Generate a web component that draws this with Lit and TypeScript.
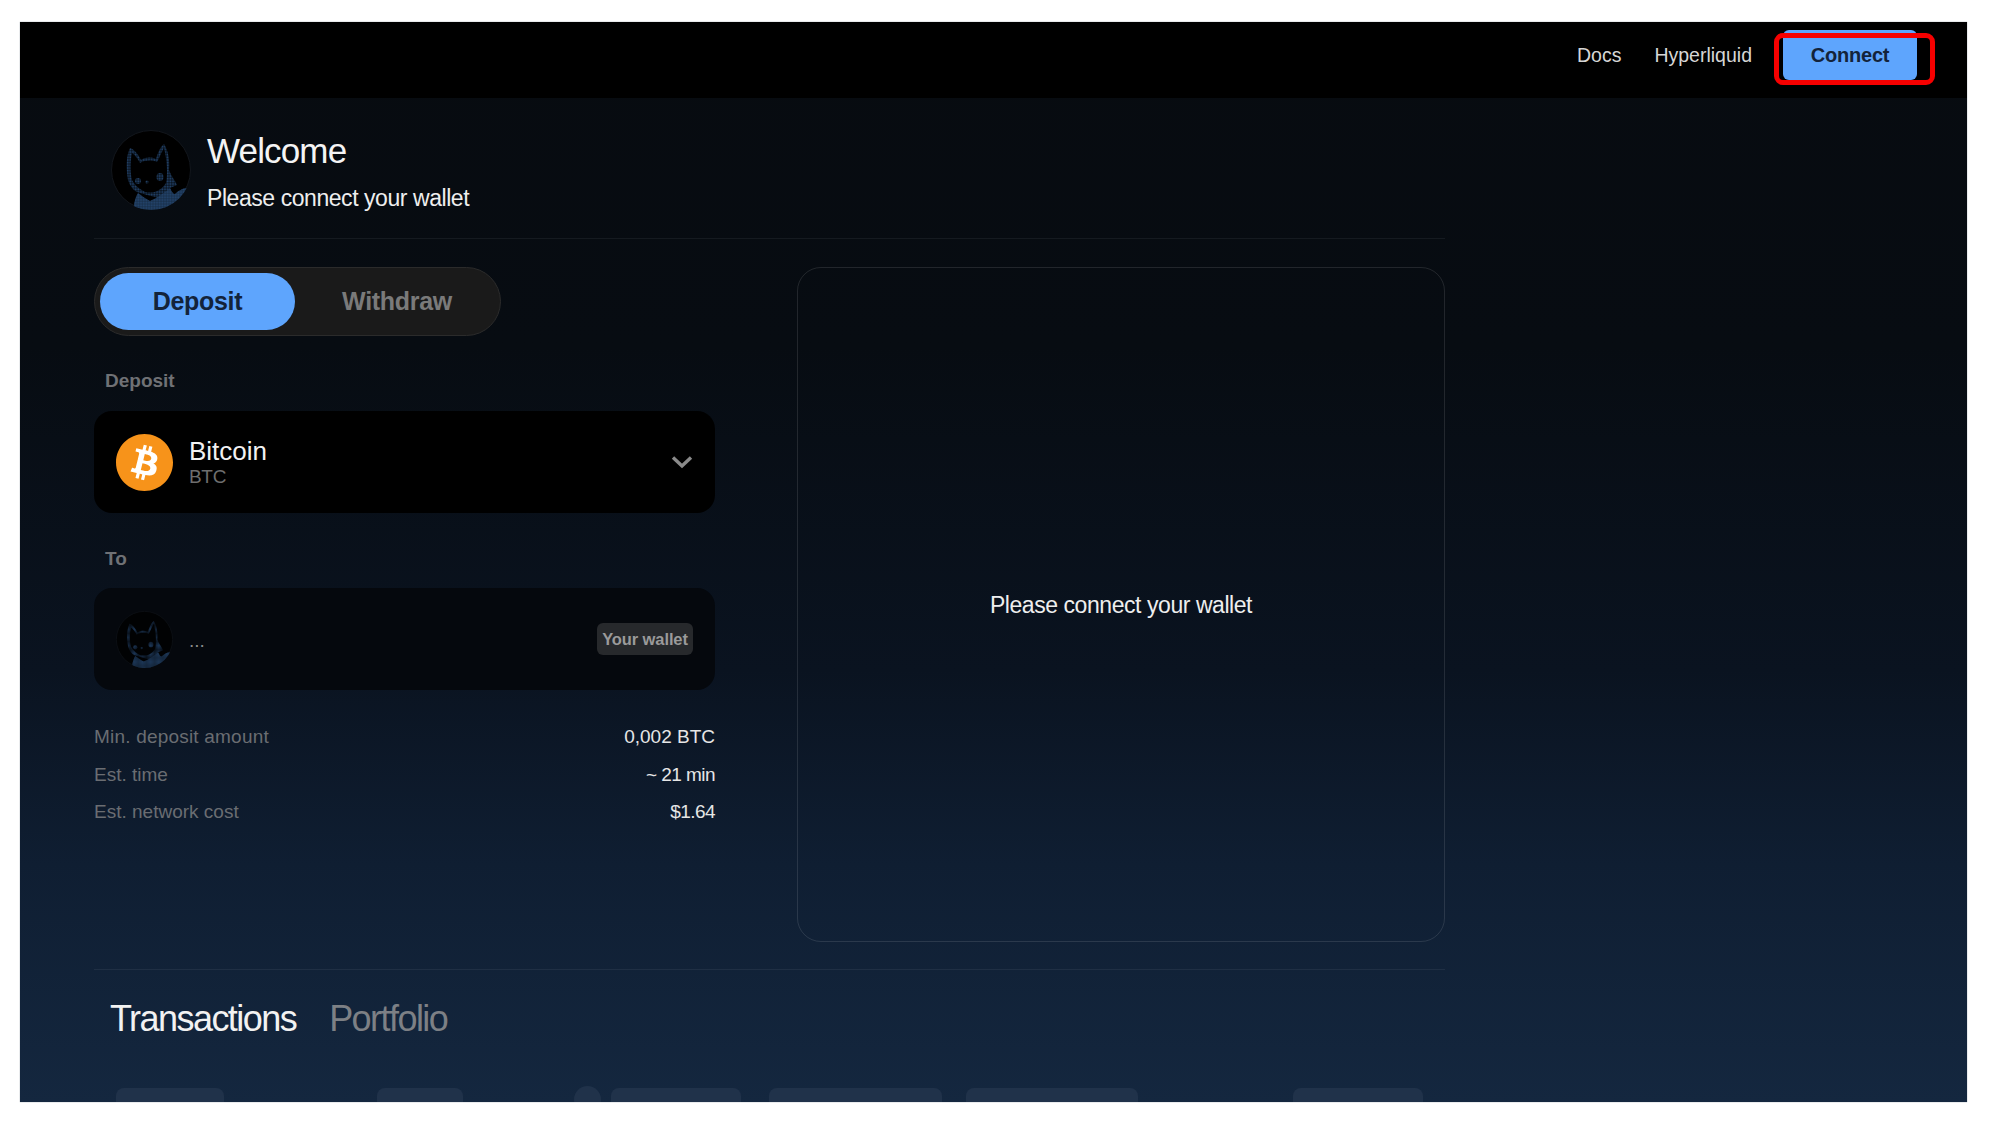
import { LitElement, html, css, svg } from "lit";
import { customElement } from "lit/decorators.js";

const skeletons = [
  { w: 108, gap: 153 },
  { w: 86, gap: 111 },
  { w: 27, gap: 10, round: true },
  { w: 130, gap: 28 },
  { w: 173, gap: 24 },
  { w: 172, gap: 155 },
  { w: 130, gap: 0 },
];

const cat = (size: number, dim: boolean) => html`
  <svg class=${dim ? "cat dim" : "cat"} width=${size} height=${size} viewBox="0 0 80 80">
    ${svg`
    <defs>
      <pattern id="dots" width="1.6" height="1.6" patternUnits="userSpaceOnUse">
        <rect width="1.2" height="1.2" fill="#24466f"></rect>
      </pattern>
      <clipPath id="disc"><circle cx="40" cy="40" r="40"></circle></clipPath>
    </defs>
    <circle cx="40" cy="40" r="39.5" fill="#000" stroke="#12161c"></circle>
    <g clip-path="url(#disc)">
      <path d="M17 50 C15 38 15 26 19 18 C23 19 27 24 30 30 C35 27 40 27 45 29 C47 22 50 16 53 14 C57 20 59 30 58 40 C60 46 64 50 66 55 L59 58 C55 62 52 66 48 68 C40 66 32 64 26 62 C22 60 19 56 17 50 Z M21 23 C19 32 19 42 21 50 C24 56 29 59 34 62 C42 64 50 61 55 53 C57 44 56 30 53 18 C50 23 48 29 46 32 C41 30 34 30 29 33 C27 29 24 25 21 23 Z" fill="url(#dots)" fill-rule="evenodd"></path>
      <path d="M23 80 L23 74 C24 70 25 66 27 63 C31 66 35 69 39 71 C46 68 53 63 59 58 C61 62 62 64 64 64 C67 61 72 58 76 58 L78 64 C74 72 66 80 60 80 Z" fill="#16293f"></path>
      <path d="M23 80 L23 74 C24 70 25 66 27 63 C31 66 35 69 39 71 C46 68 53 63 59 58 C61 62 62 64 64 64 C67 61 72 58 76 58 L78 64 C74 72 66 80 60 80 Z" fill="url(#dots)"></path>
      <circle cx="27" cy="51" r="3" fill="url(#dots)"></circle>
      <ellipse cx="49" cy="47" rx="3.5" ry="4" fill="url(#dots)"></ellipse>
      <circle cx="36" cy="52" r="1.6" fill="url(#dots)"></circle>
    </g>`}
  </svg>
`;

const bitcoin = html`
  <svg class="coin" width="57" height="57" viewBox="0 0 32 32">
    ${svg`
    <circle cx="16" cy="16" r="13" fill="#fff"></circle>
    <path fill="#F7931A" d="M16 32C7.163 32 0 24.837 0 16S7.163 0 16 0s16 7.163 16 16-7.163 16-16 16zm7.189-18.01c.314-2.096-1.283-3.223-3.465-3.975l.708-2.84-1.728-.43-.69 2.765c-.454-.114-.92-.22-1.385-.326l.695-2.783L15.596 6l-.708 2.839c-.376-.086-.746-.17-1.104-.26l.002-.009-2.384-.595-.46 1.846s1.283.294 1.256.312c.7.175.826.638.805 1.006l-.806 3.235c.048.012.11.03.18.057l-.183-.045-1.13 4.532c-.086.212-.303.531-.793.41.018.025-1.256-.313-1.256-.313l-.858 1.978 2.25.561c.418.105.828.215 1.231.318l-.715 2.872 1.727.43.708-2.84c.472.127.93.245 1.378.357l-.706 2.828 1.728.43.715-2.866c2.948.558 5.164.333 6.097-2.333.752-2.146-.037-3.385-1.588-4.192 1.13-.26 1.98-1.003 2.207-2.538zm-3.95 5.538c-.533 2.147-4.148.986-5.32.695l.95-3.805c1.172.293 4.929.872 4.37 3.11zm.535-5.569c-.487 1.953-3.495.96-4.47.717l.86-3.45c.975.243 4.118.696 3.61 2.733z"></path>`}
  </svg>
`;

@customElement("app-root")
export class AppRoot extends LitElement {
  static styles = css`
    :host {
      display: block;
      height: 1128px;
      background: #fff;
      padding: 22px 33px 26px 20px;
      box-sizing: border-box;
      font-family: "Liberation Sans", Arial, sans-serif;
      color: #f2f2f2;
    }
    .frame {
      position: relative;
      height: 1080px;
      overflow: hidden;
      background: linear-gradient(180deg, #070b10 0%, #070c12 30%, #0a1320 60%, #0f1e32 78%, #14273f 100%);
      box-shadow: 0 0 1px #7d8794;
    }
    .top {
      height: 76px;
      box-sizing: border-box;
      background: #000;
      display: flex;
      justify-content: flex-end;
      align-items: flex-start;
      padding: 8px 50px 0 0;
    }
    .link {
      font-size: 19.5px;
      line-height: 50px;
      color: #d6d6d6;
      margin-right: 33px;
    }
    .link.last { margin-right: 31px; }
    .connect {
      width: 134px;
      height: 50px;
      border-radius: 6px;
      background: #5ea5fd;
      color: #13233a;
      font-size: 20px;
      font-weight: 700;
      letter-spacing: -0.2px;
      line-height: 50px;
      text-align: center;
      box-sizing: border-box;
    }
    .mark {
      position: absolute;
      left: 1754px;
      top: 11px;
      width: 161px;
      height: 52px;
      box-sizing: border-box;
      border: 5px solid #f60000;
      border-radius: 9px;
    }
    .main {
      width: 1351px;
      margin-left: 74px;
    }
    .welcome {
      display: flex;
      gap: 16px;
      padding: 32px 0 28px 17px;
      border-bottom: 1px solid #151a20;
    }
    .cat { display: block; flex: none; }
    .cat.dim { opacity: 0.75; }
    .greet { height: 80px; padding-top: 1px; box-sizing: border-box; }
    .greet h1 {
      margin: 0;
      font-size: 35px;
      letter-spacing: -0.85px;
      font-weight: 400;
      line-height: 40px;
      color: #f4f4f4;
    }
    .greet p {
      margin: 13px 0 0;
      font-size: 23px;
      letter-spacing: -0.44px;
      line-height: 28px;
      color: #eeeeee;
    }
    .columns {
      display: grid;
      grid-template-columns: 621px 648px;
      column-gap: 82px;
      margin-top: 28px;
    }
    .toggle {
      width: 407px;
      height: 69px;
      box-sizing: border-box;
      border: 1px solid #2b2b2b;
      border-radius: 35px;
      background: #1a1a1a;
      padding: 5px;
      display: flex;
      font-size: 25px;
      letter-spacing: -0.3px;
      font-weight: 700;
    }
    .toggle div {
      flex: 1;
      text-align: center;
      line-height: 57px;
      color: #7a7a7a;
      padding-left: 4px;
    }
    .toggle .on {
      flex: none;
      width: 195px;
      height: 57px;
      padding-left: 0;
      border-radius: 29px;
      background: #5ea5fd;
      color: #13233a;
    }
    .label {
      margin: 33px 0 18px 11px;
      font-size: 19px;
      font-weight: 700;
      line-height: 24px;
      color: #6f7175;
    }
    .label.to { margin: 34px 0 17px 11px; }
    .card {
      height: 102px;
      box-sizing: border-box;
      border-radius: 18px;
      background: #000;
      display: flex;
      align-items: center;
      padding: 0 22px;
      gap: 16px;
    }
    .card.soft { background: #05080d; }
    .coin { flex: none; }
    .asset { flex: 1; }
    .asset b {
      display: block;
      font-size: 26px;
      font-weight: 400;
      line-height: 30px;
      color: #f2f2f2;
    }
    .asset span {
      display: block;
      font-size: 19px;
      letter-spacing: -0.3px;
      line-height: 22px;
      color: #6e6e6e;
    }
    .dots {
      flex: 1;
      color: #8a8a8a;
      font-size: 19px;
      padding-top: 4px;
    }
    .chip {
      width: 96px;
      height: 32px;
      border-radius: 6px;
      background: #27292c;
      color: #9a9a9a;
      font-size: 16.5px;
      letter-spacing: -0.1px;
      font-weight: 700;
      line-height: 32px;
      text-align: center;
    }
    .rows { margin-top: 28px; }
    .row {
      display: flex;
      justify-content: space-between;
      height: 37.5px;
      line-height: 37.5px;
      font-size: 19px;
      color: #e6e6e6;
    }
    .row span { color: #6a6d72; }
    .row.lead span { letter-spacing: 0.2px; }
    .row b { font-weight: 400; letter-spacing: -0.55px; }
    .panel {
      height: 675px;
      box-sizing: border-box;
      border: 1px solid rgba(255, 255, 255, 0.11);
      border-radius: 24px;
      display: flex;
      align-items: center;
      justify-content: center;
      padding-top: 2px;
      font-size: 23px;
      letter-spacing: -0.44px;
      color: #eeeeee;
    }
    .tabs {
      margin-top: 27px;
      border-top: 1px solid #1f2f44;
      padding: 29px 0 0 16px;
      display: flex;
      gap: 33px;
      font-size: 36px;
      letter-spacing: -1.55px;
      line-height: 40px;
      color: #f2f2f2;
    }
    .tabs span { color: #7d8085; }
    .skeletons {
      display: flex;
      margin-top: 49px;
      padding-left: 22px;
    }
    .sk {
      flex: none;
      height: 40px;
      border-radius: 8px;
      background: #20324a;
    }
    .sk.round {
      margin-top: -2px;
      border-radius: 50%;
      height: 27px;
    }
  `;

  render() {
    return html`
      <div class="frame">
        <header class="top">
          <div class="link">Docs</div>
          <div class="link last">Hyperliquid</div>
          <div class="connect">Connect</div>
        </header>
        <div class="mark"></div>
        <div class="main">
          <section class="welcome">
            ${cat(80, false)}
            <div class="greet">
              <h1>Welcome</h1>
              <p>Please connect your wallet</p>
            </div>
          </section>
          <section class="columns">
            <div>
              <div class="toggle">
                <div class="on">Deposit</div>
                <div>Withdraw</div>
              </div>
              <div class="label">Deposit</div>
              <div class="card">
                ${bitcoin}
                <div class="asset"><b>Bitcoin</b><span>BTC</span></div>
                <svg width="22" height="14" viewBox="0 0 22 14" fill="none" stroke="#8a8a8a" stroke-width="3.4">
                  <path d="M2 2.5 L11 11 L20 2.5"></path>
                </svg>
              </div>
              <div class="label to">To</div>
              <div class="card soft">
                ${cat(57, true)}
                <div class="dots">...</div>
                <div class="chip">Your wallet</div>
              </div>
              <div class="rows">
                <div class="row lead"><span>Min. deposit amount</span>0,002 BTC</div>
                <div class="row"><span>Est. time</span><b>~ 21 min</b></div>
                <div class="row"><span>Est. network cost</span><b>$1.64</b></div>
              </div>
            </div>
            <div class="panel">Please connect your wallet</div>
          </section>
          <section class="tabs">
            <div>Transactions</div>
            <span>Portfolio</span>
          </section>
          <section class="skeletons">
            ${skeletons.map(
              (s) => html`<div
                class=${s.round ? "sk round" : "sk"}
                style="width:${s.w}px;margin-right:${s.gap}px"
              ></div>`
            )}
          </section>
        </div>
      </div>
    `;
  }
}
